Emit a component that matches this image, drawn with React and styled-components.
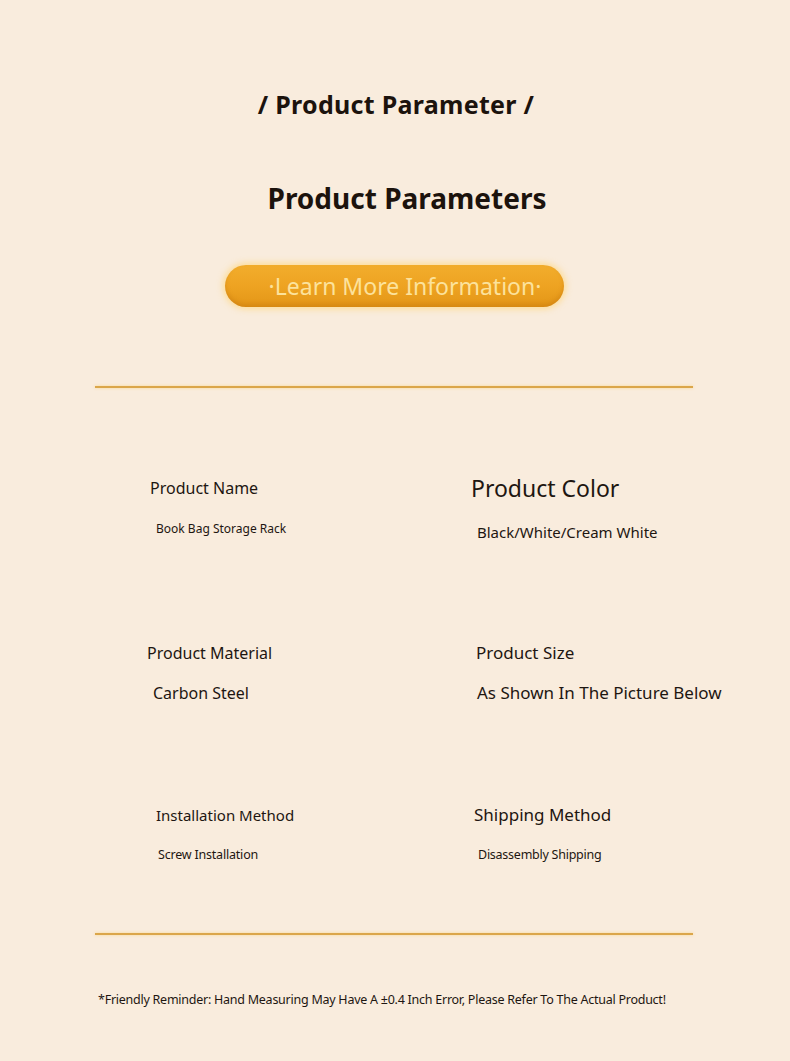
import React from "react";
import styled, { createGlobalStyle } from "styled-components";

const Global = createGlobalStyle`
  html, body { margin: 0; padding: 0; background: #f9ecdd; }
  body { font-family: "Open Sans", "Noto Sans", sans-serif; color: #1e1611; }
`;

const Page = styled.div`
  width: 790px;
  min-height: 1061px;
  box-sizing: border-box;
  padding-top: 88px;
  background: #f9ecdd;
  display: flex;
  flex-direction: column;
  align-items: center;
`;

const Eyebrow = styled.h2`
  margin: 0 0 0 2px;
  font-family: "Noto Sans", sans-serif;
  font-weight: 700;
  font-size: 25px;
  line-height: 32px;
  letter-spacing: 0.3px;
  color: #1c130d;
`;

const Heading = styled.h1`
  margin: 62px 0 0 24px;
  font-family: "Noto Sans", sans-serif;
  font-weight: 700;
  font-size: 28px;
  line-height: 32px;
  color: #1c130d;
`;

const Pill = styled.button`
  margin: 51px 0 0 -2px;
  width: 339px;
  height: 42px;
  border: none;
  border-radius: 21px;
  background: linear-gradient(180deg, #f2ad2c 0%, #eea322 50%, #e39617 100%);
  box-shadow: 0 0 6px 2px rgba(255, 214, 120, 0.7), inset 0 -3px 4px rgba(190, 110, 10, 0.35);
  color: #fce29c;
  font-family: "Noto Sans", sans-serif;
  font-size: 23px;
  line-height: 42px;
  padding: 0 0 0 22px;
  cursor: pointer;
`;

const Divider = styled.hr`
  align-self: stretch;
  margin: ${(p) => p.$top}px 97px 0 95px;
  height: 2px;
  border: none;
  background: #dba64a;
  box-shadow: 0 0 3px rgba(250, 210, 120, 0.8);
`;

const Grid = styled.div`
  align-self: stretch;
  margin: 0 97px 0 95px;
  display: grid;
  grid-template-columns: minmax(0, 1fr) minmax(0, 1fr);
  padding-top: ${(p) => p.$top}px;
`;

const Cell = styled.div`
  display: flex;
  flex-direction: column;
  padding-left: ${(p) => p.$x}px;
  height: ${(p) => p.$h}px;
`;

const Label = styled.div`
  font-family: "Noto Sans", sans-serif;
  font-size: ${(p) => p.$size}px;
  line-height: 24px;
  height: 24px;
  white-space: nowrap;
  letter-spacing: ${(p) => p.$ls || 0}px;
  color: #1e1611;
`;

const Value = styled.div`
  font-family: "Noto Sans", sans-serif;
  font-size: ${(p) => p.$size}px;
  line-height: 20px;
  margin-top: ${(p) => p.$gap}px;
  padding-left: ${(p) => p.$dx}px;
  white-space: nowrap;
  letter-spacing: ${(p) => p.$ls || 0}px;
  color: #1e1611;
`;

const Note = styled.p`
  align-self: flex-start;
  margin: 56px 0 0 98px;
  font-family: "Noto Sans", sans-serif;
  font-size: 12.5px;
  line-height: 18px;
  letter-spacing: -0.25px;
  color: #1e1611;
`;

const items = [
  { label: "Product Name", ls: 16, value: "Book Bag Storage Rack", vs: 12, x: 55, gap: 19, dx: 6, h: 165 },
  { label: "Product Color", ls: 23, value: "Black/White/Cream White", vs: 15, x: 77, gap: 22, dx: 6, h: 165 },
  { label: "Product Material", ls: 16, value: "Carbon Steel", vs: 16, x: 52, gap: 18, dx: 6, h: 162 },
  { label: "Product Size", ls: 17, value: "As Shown In The Picture Below", vs: 17, x: 82, gap: 18, dx: 1, h: 162 },
  { label: "Installation Method", ls: 15, value: "Screw Installation", vs: 12.5, x: 61, gap: 18, dx: 2, h: 130, lsv: -0.2 },
  { label: "Shipping Method", ls: 17, value: "Disassembly Shipping", vs: 12.5, x: 80, gap: 18, dx: 4, h: 130, lsv: -0.25 },
];

export default function App() {
  return (
    <>
      <Global />
      <Page>
        <Eyebrow>/ Product Parameter /</Eyebrow>
        <Heading>Product Parameters</Heading>
        <Pill>·Learn More Information·</Pill>
        <Divider $top={79} />
        <Grid $top={88}>
          {items.map((it) => (
            <Cell key={it.label} $x={it.x} $h={it.h}>
              <Label $size={it.ls} $ls={it.lsl}>{it.label}</Label>
              <Value $size={it.vs} $gap={it.gap} $dx={it.dx} $ls={it.lsv}>{it.value}</Value>
            </Cell>
          ))}
        </Grid>
        <Divider $top={0} />
        <Note>*Friendly Reminder: Hand Measuring May Have A ±0.4 Inch Error, Please Refer To The Actual Product!</Note>
      </Page>
    </>
  );
}
